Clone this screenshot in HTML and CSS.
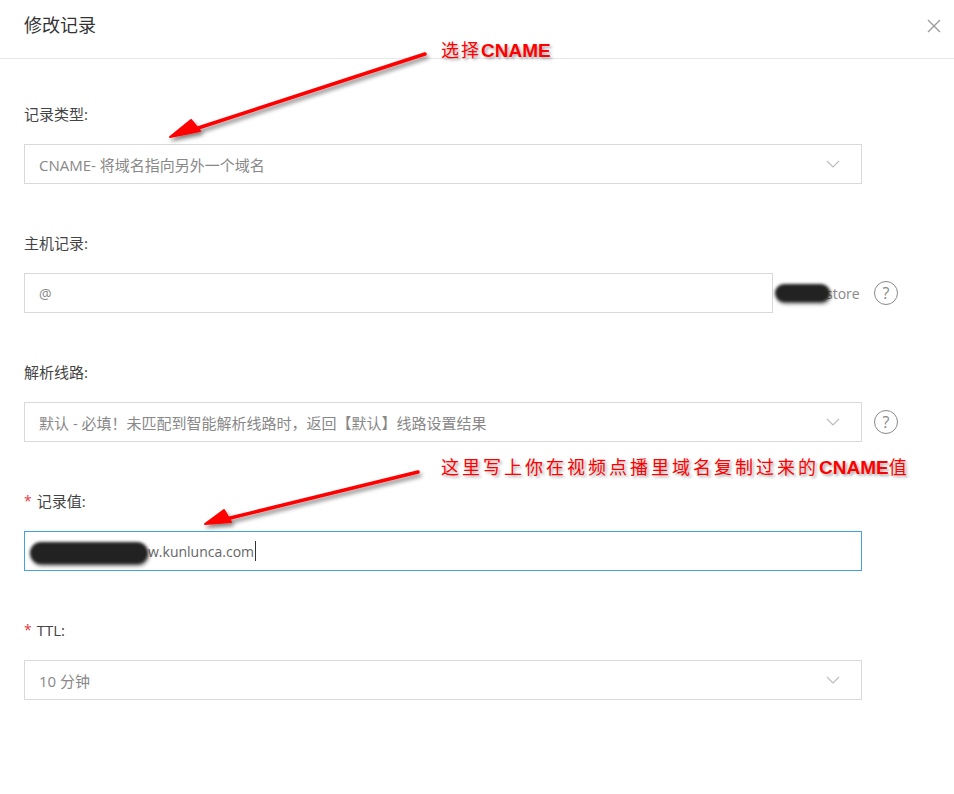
FILE: index.html
```html
<!DOCTYPE html>
<html lang="zh-CN">
<head>
<meta charset="utf-8">
<title>修改记录</title>
<link rel="stylesheet" href="styles.css">
</head>
<body>
<div class="dialog">
  <div class="header">
    <span class="title">修改记录</span>
    <span class="close">
      <svg width="14" height="14" viewBox="0 0 14 14"><path d="M1 1L13 13M13 1L1 13" stroke="#999" stroke-width="1.3" fill="none"/></svg>
    </span>
  </div>
  <div class="form">
    <div class="item">
      <div class="label">记录类型:</div>
      <div class="row">
        <div class="select">
          <span class="val">CNAME- 将域名指向另外一个域名</span>
          <svg class="chev" width="14" height="8" viewBox="0 0 14 8"><path d="M1 1L7 7L13 1" stroke="#bbb" stroke-width="1.1" fill="none"/></svg>
        </div>
      </div>
    </div>
    <div class="item">
      <div class="label">主机记录:</div>
      <div class="row">
        <div class="input host"><span class="val">@</span></div>
        <span class="suffix"><span class="blob blob1"></span><span class="suf-text">store</span></span>
        <span class="help">?</span>
      </div>
    </div>
    <div class="item">
      <div class="label">解析线路:</div>
      <div class="row">
        <div class="select">
          <span class="val">默认 - 必填！未匹配到智能解析线路时，返回【默认】线路设置结果</span>
          <svg class="chev" width="14" height="8" viewBox="0 0 14 8"><path d="M1 1L7 7L13 1" stroke="#bbb" stroke-width="1.1" fill="none"/></svg>
        </div>
        <span class="help">?</span>
      </div>
    </div>
    <div class="item">
      <div class="label"><span class="req">*</span>记录值:</div>
      <div class="row">
        <div class="input focus"><span class="blob blob2"></span><span class="val dark">w.kunlunca.com</span><span class="caret"></span></div>
      </div>
    </div>
    <div class="item">
      <div class="label"><span class="req">*</span>TTL:</div>
      <div class="row">
        <div class="select">
          <span class="val">10 分钟</span>
          <svg class="chev" width="14" height="8" viewBox="0 0 14 8"><path d="M1 1L7 7L13 1" stroke="#bbb" stroke-width="1.1" fill="none"/></svg>
        </div>
      </div>
    </div>
  </div>

  <svg class="arrows" width="954" height="794" viewBox="0 0 954 794">
    <defs>
      <filter id="sh" x="-20%" y="-20%" width="140%" height="140%">
        <feGaussianBlur in="SourceAlpha" stdDeviation="2"/>
        <feOffset dx="2" dy="3" result="b"/>
        <feComponentTransfer><feFuncA type="linear" slope="0.5"/></feComponentTransfer>
        <feMerge><feMergeNode/><feMergeNode in="SourceGraphic"/></feMerge>
      </filter>
    </defs>
    <g filter="url(#sh)">
      <path d="M425 54 L192 130" stroke="#f00" stroke-width="3.5" stroke-linecap="round" fill="none"/>
      <path d="M170 137 L191 120 L200 131 Z" fill="#f00" stroke="#f00" stroke-width="2" stroke-linejoin="round"/>
      <path d="M418 472 L226 519" stroke="#f00" stroke-width="3.5" stroke-linecap="round" fill="none"/>
      <path d="M205 524 L224 510 L231 522 Z" fill="#f00" stroke="#f00" stroke-width="2" stroke-linejoin="round"/>
    </g>
  </svg>
  <div class="note note1">选择<b>CNAME</b></div>
  <div class="note note2">这里写上你在视频点播里域名复制过来的<b>CNAME</b>值</div>
</div>
</body>
</html>
```

FILE: styles.css
```css
* { box-sizing: border-box; }
html, body { margin: 0; padding: 0; background: #fff; }
body {
  font-family: "Open Sans", "Noto Sans CJK SC", sans-serif;
  color: #333;
  width: 954px;
  height: 794px;
  overflow: hidden;
}
.dialog { position: relative; width: 954px; height: 794px; }
.header {
  height: 59px;
  border-bottom: 1px solid #e8e8e8;
  display: flex;
  align-items: flex-start;
  justify-content: space-between;
  padding: 12px 13px 0 24px;
}
.title { font-size: 18px; line-height: 26px; color: #333; }
.close { display: flex; padding-top: 7px; }
.form { padding: 45px 24px 0 24px; }
.item { margin-bottom: 49px; }
.label {
  font-size: 15px;
  line-height: 20px;
  height: 20px;
  margin-bottom: 20px;
  color: #444;
  display: flex;
  align-items: center;
}
.req { color: #e4393c; margin-right: 5px; font-size: 14px; }
.row { display: flex; align-items: center; height: 40px; }
.select, .input {
  height: 40px;
  border: 1px solid #d9d9d9;
  display: flex;
  align-items: center;
  padding: 0 14px;
  font-size: 15px;
  color: #888;
  background: #fff;
}
.select { width: 838px; justify-content: space-between; }
.input { width: 838px; font-size: 14px; }
.input.host { width: 749px; }
.input.focus { border-color: #44a1e6; padding-left: 5px; }
.val { white-space: nowrap; }
.val.dark { color: #666; }
.chev { margin-right: 7px; }
.caret { display: inline-block; width: 1px; height: 20px; background: #333; margin-left: 1px; }
.suffix {
  display: flex;
  align-items: center;
  width: 89px;
  padding-left: 2px;
  font-size: 14px;
  color: #888;
}
.suf-text { margin-left: -4px; }
.blob {
  display: inline-block;
  background: #222;
  filter: blur(1.5px);
  border-radius: 12px;
  box-shadow: 1px 2px 3px rgba(0,0,0,0.5);
}
.blob1 { width: 55px; height: 18px; }
.blob2 { width: 118px; height: 22px; margin-top: 3px; }
.help {
  width: 24px;
  height: 24px;
  border: 1.5px solid #888;
  border-radius: 50%;
  display: flex;
  align-items: center;
  justify-content: center;
  font-size: 16px;
  color: #888;
  margin-left: 12px;
  line-height: 1;
}
.arrows { position: absolute; left: 0; top: 0; pointer-events: none; }
.note {
  position: absolute;
  color: #f00;
  font-family: "Noto Sans CJK SC", sans-serif;
  font-size: 18px;
  line-height: 22px;
  letter-spacing: 3px;
  text-shadow: 2px 2px 3px rgba(0,0,0,0.35);
  white-space: nowrap;
}
.note b {
  font-family: "Liberation Sans", Arial, sans-serif;
  font-weight: 700;
  letter-spacing: 0;
  font-size: 19px;
}
.note1 { left: 441px; top: 38px; letter-spacing: 2px; }
.note2 { left: 441px; top: 455px; }
```
